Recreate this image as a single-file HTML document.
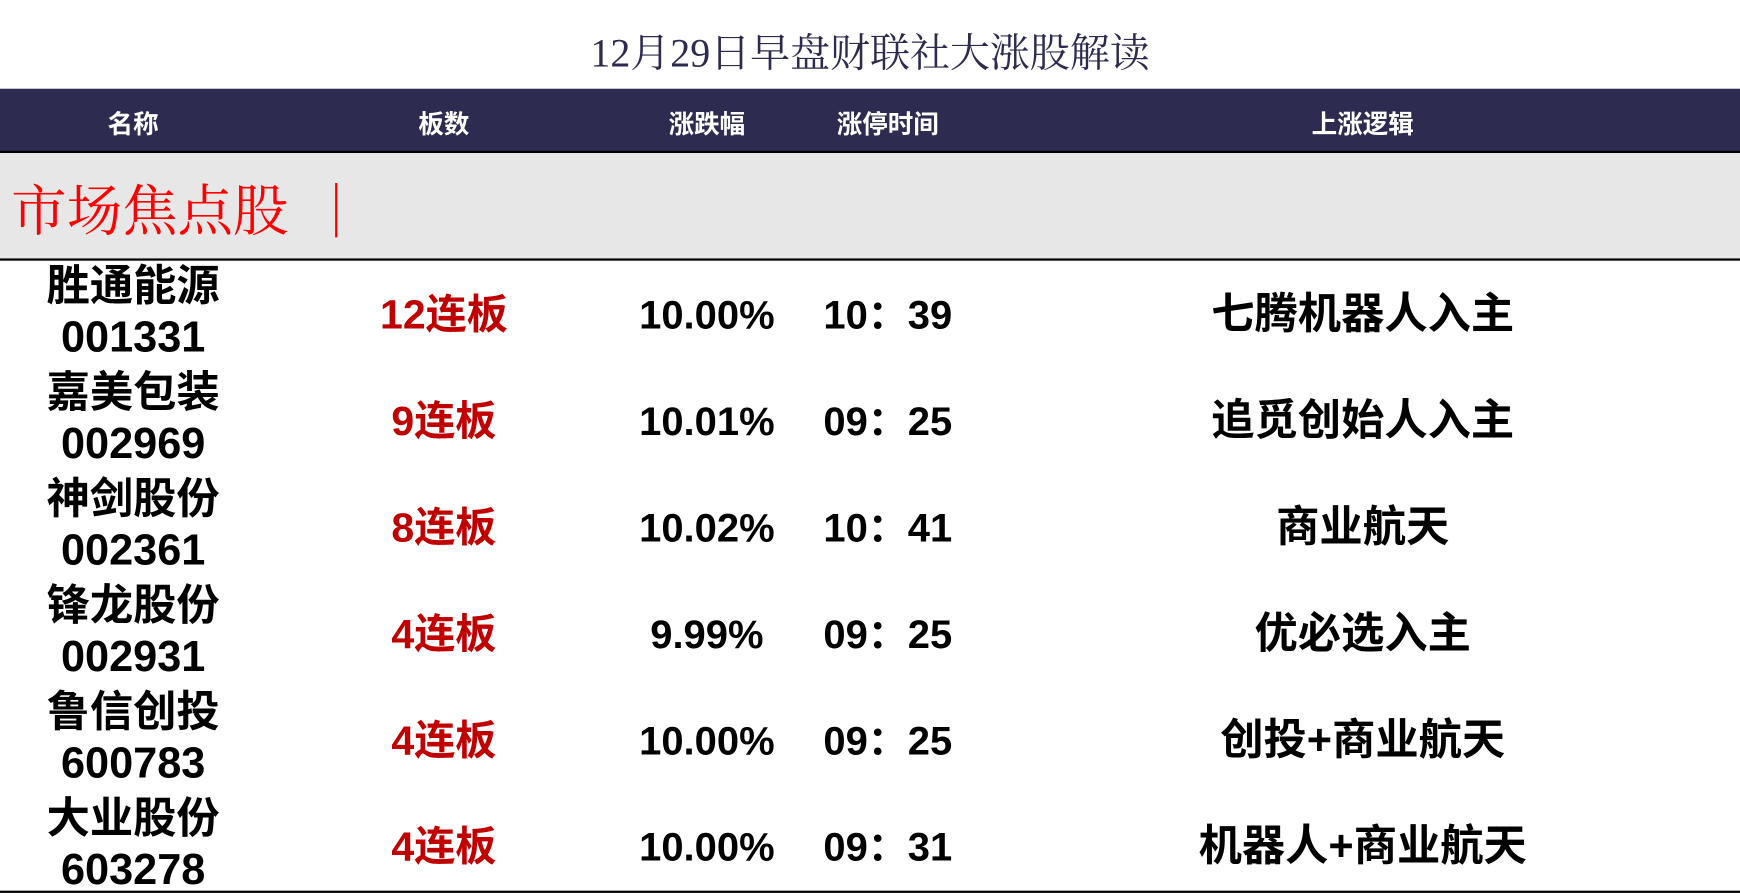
<!DOCTYPE html>
<html><head><meta charset="utf-8"><style>
html,body{margin:0;padding:0;background:#fff;overflow:hidden;width:1740px;height:894px}
#w{position:absolute;left:0;top:0;width:1568px;height:806px;transform-origin:0 0;transform:scale(1.1097,1.1092);font-family:"Liberation Sans","Noto Sans CJK SC",sans-serif}
.t{position:absolute;white-space:nowrap;transform:translateX(-50%);text-align:center}
.title{left:784px;top:20px;font-family:"Liberation Serif","Noto Serif CJK SC",serif;font-size:36px;color:#2d2b50}
.hd{position:absolute;left:0;top:80px;width:1568px;height:56px;background:#2d2b50;border-bottom:2px solid #000}
.h{top:93px;color:#fff;font-weight:bold;font-size:23px}
.gray{position:absolute;left:0;top:138px;width:1568px;height:95px;background:#e7e7e7;border-bottom:2px solid #000}
.red{position:absolute;left:10px;top:155px;font-family:"Noto Serif CJK SC",serif;font-size:50px;color:#f00;line-height:64px}
.vl{position:absolute;left:302px;top:165px;width:2px;height:49px;background:#e00}
.n{font-size:39px;font-weight:bold;color:#000;line-height:46px}
.p{font-size:36px;font-weight:bold;color:#000;line-height:46px}
.b{color:#c00000;font-size:37px}
.bot{position:absolute;left:0;top:803px;width:1568px;height:2px;background:#000}
</style></head><body><div id="w">
<div class="t title">12月29日早盘财联社大涨股解读</div>
<div class="hd"></div>
<div class="t h" style="left:120px">名称</div>
<div class="t h" style="left:400px">板数</div>
<div class="t h" style="left:637px">涨跌幅</div>
<div class="t h" style="left:800px">涨停时间</div>
<div class="t h" style="left:1228px">上涨逻辑</div>
<div class="gray"></div>
<div class="red">市场焦点股</div><div class="vl"></div>

<div class="t n" style="left:120px;top:236px">胜通能源<br>001331</div>
<div class="t n b" style="left:400px;top:261px">12连板</div>
<div class="t p" style="left:637px;top:261px">10.00%</div>
<div class="t p" style="left:800px;top:261px">10：39</div>
<div class="t n" style="left:1228px;top:261px">七腾机器人入主</div>

<div class="t n" style="left:120px;top:332px">嘉美包装<br>002969</div>
<div class="t n b" style="left:400px;top:357px">9连板</div>
<div class="t p" style="left:637px;top:357px">10.01%</div>
<div class="t p" style="left:800px;top:357px">09：25</div>
<div class="t n" style="left:1228px;top:357px">追觅创始人入主</div>

<div class="t n" style="left:120px;top:428px">神剑股份<br>002361</div>
<div class="t n b" style="left:400px;top:453px">8连板</div>
<div class="t p" style="left:637px;top:453px">10.02%</div>
<div class="t p" style="left:800px;top:453px">10：41</div>
<div class="t n" style="left:1228px;top:453px">商业航天</div>

<div class="t n" style="left:120px;top:524px">锋龙股份<br>002931</div>
<div class="t n b" style="left:400px;top:549px">4连板</div>
<div class="t p" style="left:637px;top:549px">9.99%</div>
<div class="t p" style="left:800px;top:549px">09：25</div>
<div class="t n" style="left:1228px;top:549px">优必选入主</div>

<div class="t n" style="left:120px;top:620px">鲁信创投<br>600783</div>
<div class="t n b" style="left:400px;top:645px">4连板</div>
<div class="t p" style="left:637px;top:645px">10.00%</div>
<div class="t p" style="left:800px;top:645px">09：25</div>
<div class="t n" style="left:1228px;top:645px">创投+商业航天</div>

<div class="t n" style="left:120px;top:716px">大业股份<br>603278</div>
<div class="t n b" style="left:400px;top:741px">4连板</div>
<div class="t p" style="left:637px;top:741px">10.00%</div>
<div class="t p" style="left:800px;top:741px">09：31</div>
<div class="t n" style="left:1228px;top:741px">机器人+商业航天</div>
<div class="bot"></div>
</div></body></html>
